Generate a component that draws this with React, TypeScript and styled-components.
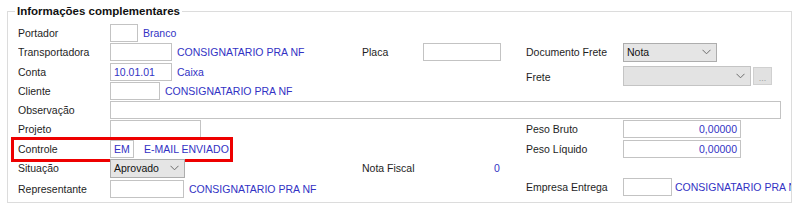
import React from "react";
import styled, { createGlobalStyle } from "styled-components";

const Global = createGlobalStyle`
  html, body { margin: 0; padding: 0; background: #ffffff; }
  body { font-family: "Liberation Sans", Arial, sans-serif; font-size: 10.5px; color: #1e1e1e; }
`;

const Group = styled.fieldset`
  margin: 4px 7px 0 7px;
  padding: 5px 0 4px 6px;
  border: 1px solid #dcdcdc;
  height: 199px;
  box-sizing: border-box;
  min-width: 0;
`;

const Legend = styled.legend`
  font-weight: bold;
  font-size: 11.5px;
  color: #111;
  padding: 0 2px;
  margin-left: 1px;
  line-height: 14px;
`;

const Grid = styled.div`
  display: grid;
  margin-left: 4px;
  grid-template-columns: 92px 252px 61px 103px 97px 1fr;
  grid-template-rows: 19px 20px 19px 19px 19px 20px 19px 20px 22px;
  align-items: center;
`;

const Cell = styled.div<{
  $col: number;
  $row: number;
  $colSpan?: number;
  $rowSpan?: number;
  $offset?: number;
  $lift?: number;
  $gap?: number;
}>`
  grid-column: ${(p) => p.$col} / span ${(p) => p.$colSpan ?? 1};
  grid-row: ${(p) => p.$row} / span ${(p) => p.$rowSpan ?? 1};
  display: flex;
  align-items: center;
  gap: ${(p) => p.$gap ?? 5}px;
  min-width: 0;
  overflow: hidden;
  white-space: nowrap;
  min-height: 20px;
  ${(p) => (p.$offset !== undefined ? `margin-top: ${p.$offset}px; align-self: start;` : "")}
  ${(p) => (p.$lift ? `margin-bottom: ${p.$lift * 2}px;` : "")}
`;

const Label = styled.span`
  color: #1e1e1e;
`;

const Link = styled.span<{ $indent?: number }>`
  color: #3232c4;
  padding-left: ${(p) => p.$indent ?? 0}px;
`;

const Input = styled.div<{ $w: number; $align?: "left" | "right" }>`
  box-sizing: border-box;
  width: ${(p) => p.$w}px;
  height: 18px;
  flex: none;
  border: 1px solid #c3c3c3;
  background: #ffffff;
  color: #3232c4;
  padding: 0 3px;
  display: flex;
  align-items: center;
  justify-content: ${(p) => (p.$align === "right" ? "flex-end" : "flex-start")};
`;

const Select = styled.div<{ $w: number; $disabled?: boolean }>`
  box-sizing: border-box;
  width: ${(p) => p.$w}px;
  height: ${(p) => (p.$disabled ? 20 : 19)}px;
  flex: none;
  border: 1px solid ${(p) => (p.$disabled ? "#c4c4c4" : "#adadad")};
  background: ${(p) => (p.$disabled ? "#e3e3e3" : "#e5e5e5")};
  color: #111;
  padding: 0 5px 0 3px;
  display: flex;
  align-items: center;
  justify-content: space-between;
`;

const Chevron = () => (
  <svg width="9" height="6" viewBox="0 0 9 6">
    <path d="M0.5 0.8 L4.5 4.8 L8.5 0.8" fill="none" stroke="#6d6d6d" strokeWidth="1" />
  </svg>
);

const DotsButton = styled.div`
  box-sizing: border-box;
  width: 19px;
  height: 18px;
  flex: none;
  margin-left: -3px;
  background: #e1e1e1;
  border: 1px solid #d0d0d0;
  color: #a0a0a0;
  font-size: 9px;
  display: flex;
  align-items: flex-end;
  justify-content: center;
  padding-bottom: 3px;
  line-height: 6px;
`;

const Highlight = styled.div`
  grid-column: 1 / span 2;
  grid-row: 7;
  justify-self: start;
  align-self: stretch;
  margin: -2px 0 -4px -7px;
  width: 222px;
  box-sizing: border-box;
  border: 3px solid #ee0000;
  pointer-events: none;
`;

export default function App() {
  return (
    <>
      <Global />
      <Group>
        <Legend>Informações complementares</Legend>
        <Grid>
          <Cell $col={1} $row={1}><Label>Portador</Label></Cell>
          <Cell $col={2} $row={1}><Input $w={28} /><Link>Branco</Link></Cell>

          <Cell $col={1} $row={2}><Label>Transportadora</Label></Cell>
          <Cell $col={2} $row={2}><Input $w={62} /><Link>CONSIGNATARIO PRA NF</Link></Cell>
          <Cell $col={3} $row={2}><Label>Placa</Label></Cell>
          <Cell $col={4} $row={2}><Input $w={78} /></Cell>
          <Cell $col={5} $row={2}><Label>Documento Frete</Label></Cell>
          <Cell $col={6} $row={2}><Select $w={94}><span>Nota</span><Chevron /></Select></Cell>

          <Cell $col={1} $row={3}><Label>Conta</Label></Cell>
          <Cell $col={2} $row={3}><Input $w={62}>10.01.01</Input><Link>Caixa</Link></Cell>
          <Cell $col={5} $row={3} $rowSpan={2} $offset={5}><Label>Frete</Label></Cell>
          <Cell $col={6} $row={3} $rowSpan={2} $offset={4}>
            <Select $w={128} $disabled><span /><Chevron /></Select>
            <DotsButton>...</DotsButton>
          </Cell>

          <Cell $col={1} $row={4}><Label>Cliente</Label></Cell>
          <Cell $col={2} $row={4}><Input $w={50} /><Link>CONSIGNATARIO PRA NF</Link></Cell>

          <Cell $col={1} $row={5}><Label>Observação</Label></Cell>
          <Cell $col={2} $row={5} $colSpan={5}><Input $w={671} /></Cell>

          <Cell $col={1} $row={6}><Label>Projeto</Label></Cell>
          <Cell $col={2} $row={6}><Input $w={91} /></Cell>
          <Cell $col={5} $row={6}><Label>Peso Bruto</Label></Cell>
          <Cell $col={6} $row={6}><Input $w={118} $align="right">0,00000</Input></Cell>

          <Highlight />
          <Cell $col={1} $row={7}><Label>Controle</Label></Cell>
          <Cell $col={2} $row={7} $gap={10}><Input $w={24}>EM</Input><Link>E-MAIL ENVIADO</Link></Cell>
          <Cell $col={5} $row={7}><Label>Peso Líquido</Label></Cell>
          <Cell $col={6} $row={7}><Input $w={118} $align="right">0,00000</Input></Cell>

          <Cell $col={1} $row={8}><Label>Situação</Label></Cell>
          <Cell $col={2} $row={8}><Select $w={75}><span>Aprovado</span><Chevron /></Select></Cell>
          <Cell $col={3} $row={8}><Label>Nota Fiscal</Label></Cell>
          <Cell $col={4} $row={8}><Link $indent={71}>0</Link></Cell>

          <Cell $col={1} $row={9}><Label>Representante</Label></Cell>
          <Cell $col={2} $row={9}><Input $w={74} /><Link>CONSIGNATARIO PRA NF</Link></Cell>
          <Cell $col={5} $row={9} $lift={2}><Label>Empresa Entrega</Label></Cell>
          <Cell $col={6} $row={9} $lift={2} $gap={3}><Input $w={49} /><Link>CONSIGNATARIO PRA NF</Link></Cell>
        </Grid>
      </Group>
    </>
  );
}
